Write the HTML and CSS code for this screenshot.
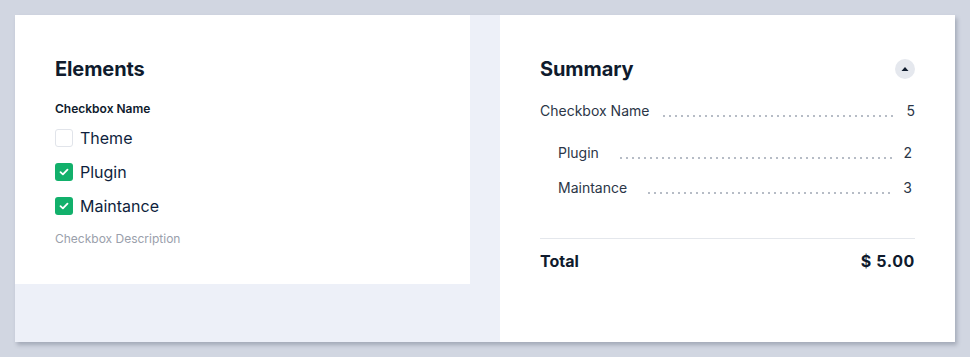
FILE: index.html
```html
<html lang="en">

<head>
    <meta charset="UTF-8">
    <meta name="viewport" content="width=device-width, initial-scale=1.0">
    <title>Checkbox summary</title>
    <link rel="stylesheet" href="styles.css">
</head>

<body>
    <div class="card">
        <div class="elements">
            <h2>Elements</h2>
            <div class="group-name">Checkbox Name</div>
            <label class="check">
                <span class="box"></span>
                <span>Theme</span>
            </label>
            <label class="check">
                <span class="box checked">
                    <svg width="10" height="8" viewBox="0 0 10 8"><path d="M1.5 4.2 L3.9 6.4 L8.5 1.6" fill="none" stroke="#fff" stroke-width="1.8" stroke-linecap="round" stroke-linejoin="round"/></svg>
                </span>
                <span>Plugin</span>
            </label>
            <label class="check">
                <span class="box checked">
                    <svg width="10" height="8" viewBox="0 0 10 8"><path d="M1.5 4.2 L3.9 6.4 L8.5 1.6" fill="none" stroke="#fff" stroke-width="1.8" stroke-linecap="round" stroke-linejoin="round"/></svg>
                </span>
                <span>Maintance</span>
            </label>
            <div class="desc">Checkbox Description</div>
        </div>

        <div class="summary">
            <div class="summary-head">
                <h2>Summary</h2>
                <button class="collapse">
                    <svg width="8" height="6" viewBox="0 0 8 6"><path d="M4 1 L7.5 5 L0.5 5 Z" fill="#0f1b2d"/></svg>
                </button>
            </div>
            <div class="line">
                <span>Checkbox Name</span>
                <span class="dots"></span>
                <span>5</span>
            </div>
            <div class="line sub">
                <span>Plugin</span>
                <span class="dots"></span>
                <span>2</span>
            </div>
            <div class="line sub">
                <span>Maintance</span>
                <span class="dots"></span>
                <span>3</span>
            </div>
            <div class="total">
                <span>Total</span>
                <span class="amount">$ 5.00</span>
            </div>
        </div>
    </div>
</body>

</html>
```

FILE: styles.css
```css
body {
    margin: 0;
    padding: 15px;
    background: #d1d6e1;
    font-family: "Inter", "Noto Sans", sans-serif;
    color: #0f1b2d;
}

.card {
    width: 940px;
    height: 327px;
    display: flex;
    align-items: flex-start;
    gap: 30px;
    background: #edf0f8;
    box-shadow: 2px 3px 4px rgba(60, 70, 90, 0.3);
}

h2 {
    margin: 0;
    font-size: 20px;
    font-weight: 700;
    letter-spacing: -0.1px;
    color: #0f1b2d;
}

.elements {
    width: 455px;
    height: 269px;
    box-sizing: border-box;
    padding: 42px 40px 0;
    background: #fff;
}

.group-name {
    margin-top: 20px;
    margin-bottom: 5px;
    font-size: 12px;
    font-weight: 600;
    color: #0f1b2d;
}

.check {
    display: flex;
    align-items: center;
    gap: 7px;
    height: 34px;
    font-size: 16px;
    color: #0f1f3d;
}

.box {
    width: 18px;
    height: 18px;
    box-sizing: border-box;
    border: 1.5px solid #e1e4ea;
    border-radius: 3px;
    display: flex;
    align-items: center;
    justify-content: center;
}

.box.checked {
    border: none;
    background: #12b06b;
}

.desc {
    margin-top: 8px;
    font-size: 12px;
    color: #9aa0ab;
}

.summary {
    width: 455px;
    height: 327px;
    box-sizing: border-box;
    padding: 42px 40px 0;
    background: #fff;
}

.summary-head {
    display: flex;
    justify-content: space-between;
    align-items: center;
    margin-bottom: 19px;
}

.collapse {
    width: 20px;
    height: 20px;
    padding: 0;
    border: none;
    border-radius: 50%;
    background: #e5e8ee;
    display: flex;
    align-items: center;
    justify-content: center;
}

.line {
    display: flex;
    align-items: center;
    height: 20px;
    font-size: 14px;
    color: #2b3647;
}

.line.sub {
    padding-left: 18px;
    padding-right: 3px;
}

.line + .line.sub {
    margin-top: 22px;
}

.line.sub + .line.sub {
    margin-top: 15px;
}

.dots {
    flex: 1;
    height: 2px;
    margin: 12px 10px 0 12px;
    background-image: radial-gradient(circle, #8e97a6 0.6px, transparent 0.9px);
    background-size: 6px 2px;
    background-repeat: repeat-x;
}

.line.sub .dots {
    margin-left: 19px;
}

.total {
    margin-top: 41px;
    padding-top: 12px;
    border-top: 1px solid #e4e7ec;
    display: flex;
    justify-content: space-between;
    font-size: 16px;
    font-weight: 700;
    color: #0f1b2d;
}

.amount {
    letter-spacing: 0.6px;
}
```
